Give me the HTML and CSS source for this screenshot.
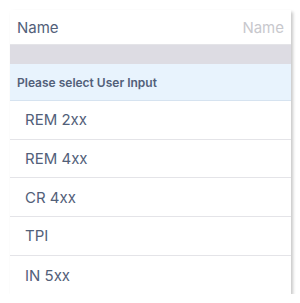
FILE: index.html
```html
<!DOCTYPE html>
<html>
    <head>
        <title>User Input</title>
        <link rel="stylesheet" href="styles.css">
    </head>
    <body>
        <div class="panel">
            <div class="field">
                <span class="field-label">Name</span>
                <span class="field-placeholder">Name</span>
            </div>
            <div class="spacer"></div>
            <div class="section-title">Please select User Input</div>
            <ul class="options">
                <li>REM 2xx</li>
                <li>REM 4xx</li>
                <li>CR 4xx</li>
                <li>TPI</li>
                <li>IN 5xx</li>
            </ul>
        </div>
    </body>
</html>
```

FILE: styles.css
```css
html {
    height:100%;
}

body {
    margin:0;
    padding:10px 9px 0 10px;
    background:#FFFFFF;
    font-family: Inter, "Noto Sans", sans-serif;
    color:#526079;
}

.panel {
    background:#FFFFFF;
    box-shadow:2px 2px 3px rgba(0,0,0,0.22);
}

.field {
    display:flex;
    justify-content:space-between;
    align-items:center;
    height:35px;
    padding:0 7px 0 7px;
    font-size:15px;
    border-bottom:1px solid #e4e4e8;
    box-sizing:border-box;
}

.field-placeholder {
    color:#c8c8cd;
}

.spacer {
    height:19px;
    background:#dddce3;
}

.section-title {
    height:37px;
    line-height:37px;
    padding:0 7px;
    background:#e8f3fd;
    border-bottom:1px solid #d6e3f0;
    font-size:12px;
    font-weight:600;
    box-sizing:border-box;
}

.options {
    list-style:none;
    margin:0;
    padding:0;
}

.options li {
    height:38.7px;
    padding:0 15px;
    display:flex;
    align-items:center;
    font-size:15px;
    border-bottom:1px solid #e4e4e8;
    box-sizing:border-box;
}

.options li:last-child {
    border-bottom:0;
}
```
